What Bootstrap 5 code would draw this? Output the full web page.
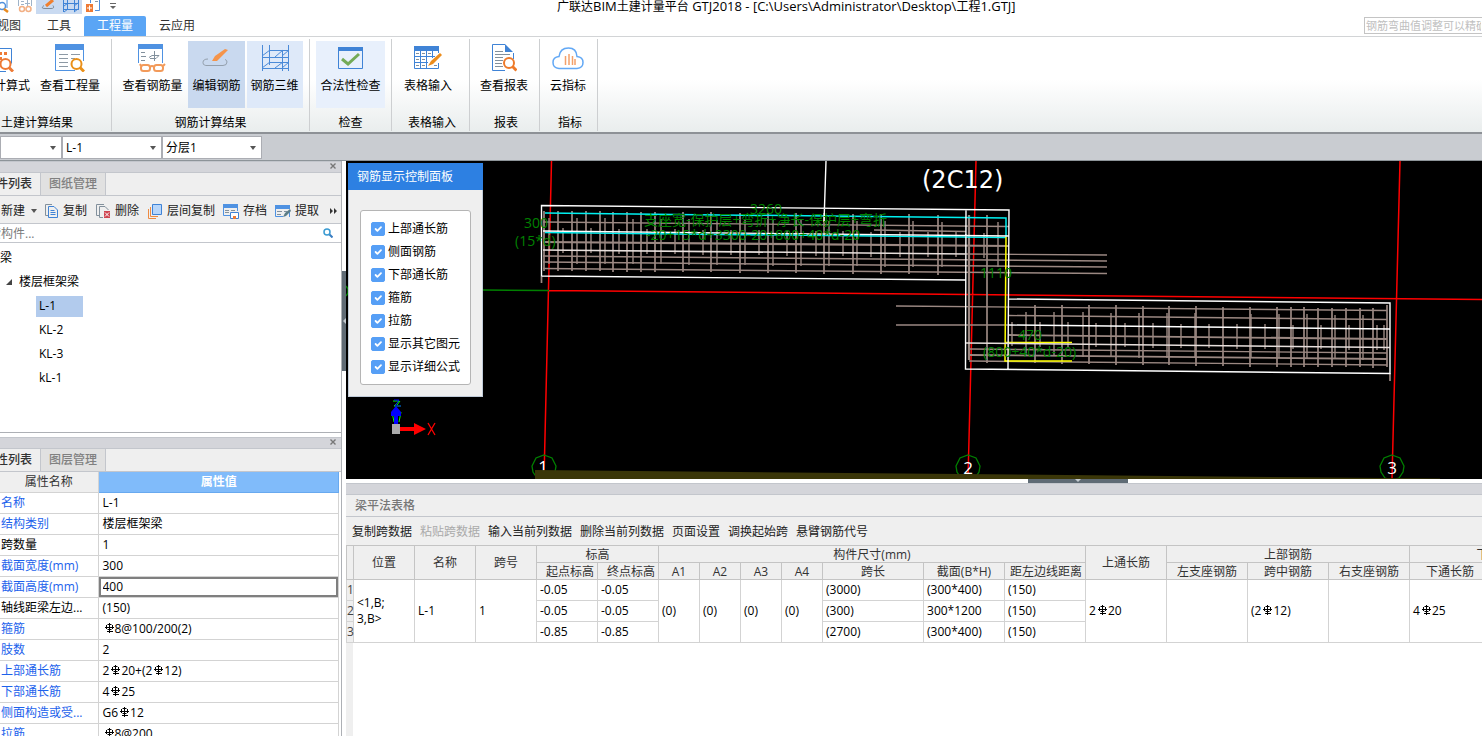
<!DOCTYPE html>
<html lang="zh-CN">
<head>
<meta charset="utf-8">
<meta name="viewport" content="width=device-width, initial-scale=1">
<title>广联达BIM土建计量平台 GTJ2018</title>
<link href="https://cdn.jsdelivr.net/npm/bootstrap@5.3.0/dist/css/bootstrap.min.css" rel="stylesheet">
<style>
  body { font-family: "Open Sans", "Noto Sans CJK SC", sans-serif; font-size: 12px; line-height: 16px; color: #000; background: #fff; }
  button, input, select { font: inherit; color: inherit; }
  button { background: none; border: 0; padding: 0; white-space: nowrap; }
  svg { display: block; flex: none; }
  table { border-collapse: collapse; }

  /* title bar and tabs */
  .titlebar { height: 16px; overflow: hidden; }
  .quick { height: 14px; width: 120px; }
  .quick-cell { width: 23px; height: 14px; display: flex; justify-content: center; align-items: flex-end; overflow: hidden; }
  .quick-cell.on { background: #c9daf1; }
  .app-title { margin-left: 437px; line-height: 12px; white-space: nowrap; }
  .app-title span { font-size: 13px; }
  .tabs-row { height: 21px; border-bottom: 1px solid #d2d4d6; }
  .ribbon-tab { color: #333; height: 20px; text-decoration: none; text-align: center; line-height: 20px; white-space: nowrap; }
  .ribbon-tab.active { background: #5aa5f5; color: #fff; border-radius: 2px 2px 0 0; }
  .help-box { width: 118px; height: 17px; margin-top: 1px; border: 1px solid #c4c4c4; border-right: 0; padding: 0 1px; font-size: 11px; }
  .help-box::placeholder { color: #c0c0c0; opacity: 1; }

  /* ribbon */
  .ribbon { height: 97px; background: linear-gradient(#fff 45%, #e9eded); border-bottom: 2px solid #8d9196; }
  .group { height: 92px; margin-top: 2px; border-right: 1px solid #cdcfd1; overflow: hidden; }
  .group-inner { flex: none; display: flex; flex-direction: column; align-items: center; }
  .shifted { padding-left: 3px; }
  .tool { height: 67px; margin-top: 2px; padding-top: 3px; display: flex; flex-direction: column; align-items: center; }
  .tool svg { margin-bottom: 6px; }
  .tool.on { background: #c9d9ef; }
  .tool.half { background: #dee9f9; }
  .tool.soft { background: #e8f0fc; }
  .group-name { margin-top: 7px; }

  .selectors { height: 27px; background: #c9ccd1; border-bottom: 1px solid #8d9499; padding-top: 2px; }
  .combo { appearance: none; width: 100px; height: 23px; border: 1px solid #abadb3; border-radius: 0; padding: 0 3px; color: #000;
    background: #fff url("data:image/svg+xml,%3Csvg xmlns='http://www.w3.org/2000/svg' width='6' height='4'%3E%3Cpath d='M0 0h6L3 4z' fill='%23555'/%3E%3C/svg%3E") no-repeat right 5px center / 6px 4px; }

  /* left docks */
  .left-side { width: 342px; border-right: 1px solid #adb0b5; }
  .strip { height: 12px; background: #d4d5da; border: 1px solid #c3c6cc; border-left: 0; border-right: 0; padding-right: 5px; }
  .strip button { height: 8px; }
  .dock-tabs { height: 23px; background: #efefef; border-bottom: 1px solid #c3c6cc; }
  .dock-tab { height: 22px; border-right: 1px solid #c3c6cc; padding: 0 8px; color: #808080; background: #e1e1e1; font-weight: 500; display: flex; align-items: center; justify-content: flex-end; overflow: hidden; }
  .dock-tab.active { width: 41px; background: #efefef; color: #333; }
  .dock-tab span { flex: none; }
  .dock-bar { height: 28px; background: #efefef; border-bottom: 1px solid #c3c6cc; color: #222; padding-top: 2px; }
  .dock-bar button { display: flex; align-items: center; gap: 4px; }
  .finder { height: 19px; border-bottom: 1px solid #c3c6cc; overflow: hidden; }
  .finder input { border: 0; height: 18px; margin-left: -24px; padding: 0 0 0 1px; outline: 0; width: 200px; }
  .finder input::placeholder { color: #7b7b7b; opacity: 1; }
  .tree { height: 190px; border-bottom: 1px solid #adb0b5; padding-top: 3px; }
  .tree li { height: 24px; display: flex; align-items: center; }
  .leaf { height: 21px; width: 47px; padding-left: 3px; margin-left: 36px; display: flex; align-items: center; }
  .leaf.active { background: #b2cbed; }
  .dock-gap { height: 4px; }

  .props { width: 339px; table-layout: fixed; }
  .props th, .props td { height: 21px; padding: 0 3px 0 4px; line-height: 16px; border: 1px solid #d3d3d3; border-top: 0; white-space: nowrap; overflow: hidden; font-weight: 400; }
  .props th:first-child { border-left: 0; padding: 0 1px; }
  .props thead th { height: 20px; text-align: center; background: #efefef; color: #333; }
  .props thead th:last-child { background: #80bbfa; color: #fff; font-weight: 700; border-color: #68a9ef; }
  .props tbody th { color: #1c62ec; }
  .props tbody th.fixed { color: #000; }
  .props td.editing { padding: 0; }
  .props td input { display: block; width: 100%; height: 20px; border: 2px solid #7f7f7f; padding: 0 2px; outline: 0; }
  .bar { display: inline-block; width: 9px; height: 10px; margin: 0 1px 0 2px; vertical-align: 0; }

  .v-split { width: 4px; background: #fff; }
  .v-split span { width: 4px; height: 100px; margin-top: 110px; background: #5f6b75; display: flex; align-items: center; }
  .h-split { height: 4px; background: #fff; }
  .h-split span { width: 100px; height: 4px; background: #5f6b75; display: flex; justify-content: center; margin-left: 682px; }

  /* drawing */
  .canvas { height: 318px; background: #000; overflow: hidden; }
  .canvas > svg { width: 100%; height: 318px; }
  .green-t { fill: #008200; font-size: 14px; }
  .panel { top: 2px; left: 2px; width: 135px; height: 234px; background: #efefef; border: 1px solid #c0cbd8; }
  .panel-head { height: 27px; background: #2d80e2; color: #fff; padding-left: 9px; line-height: 27px; margin: -1px -1px 0; }
  .panel-box { margin: 20px 11px 0; height: 175px; background: #fff; border: 1px solid #b5b5b5; border-radius: 3px; padding: 6px 10px; }
  .panel-box .form-check { height: 23px; min-height: 0; margin: 0; padding: 0; display: flex; align-items: center; gap: 3px; white-space: nowrap; }
  .panel-box .form-check-input { width: 14px; height: 14px; margin: 0; float: none; border-radius: 2px; border-color: #569ff6; background-color: #569ff6; flex: none; }

  /* span table */
  .sheet-title { height: 22px; background: #efefef; border-bottom: 1px solid #c3c6cc; color: #777; font-weight: 500; padding-left: 9px; line-height: 21px; }
  .sheet-bar { height: 28px; background: #efefef; padding: 1px 0 0 2px; color: #222; }
  .sheet-bar button { padding: 0 4px; }
  .sheet-bar button:disabled { color: #aaa; }
  .sheet { background: #fff; overflow: hidden; }
  .rail { width: 7px; background: #efefef; }
  .spans { table-layout: fixed; width: 1245px; }
  .spans th, .spans td { border: 1px solid #d3d3d3; padding: 0 3px; height: 21px; white-space: nowrap; font-weight: 400; }
  .spans thead th { background: #efefef; border-color: #c4c4c4; text-align: center; height: 17px; line-height: 15px; padding: 0; color: #333; }
  .spans thead th.end { text-align: right; padding-right: 3px; }
  .spans tbody th { padding: 0; background: #efefef; color: #444; }
  .spans tbody tr:first-child > * { border-top-color: #c4c4c4; }
</style>
</head>
<body class="vh-100 d-flex flex-column overflow-hidden">

<svg width="0" height="0" class="position-absolute" aria-hidden="true">
  <symbol id="rebar" viewBox="0 0 9 10"><path d="M4.500 0v10M0 4.500h9M2 8.500h6M2.500 1.500h4M2.500 6.500h4M1.500 2v4M7.500 2v4" fill="none" stroke="#000"/></symbol>
  <symbol id="cross" viewBox="0 0 6 6"><path d="M.5.5l5 5M5.500.5l-5 5" stroke="#777" stroke-width="1.400"/></symbol>
</svg>

<header>
  <div class="titlebar d-flex">
    <div class="quick d-flex">
      <div class="quick-cell" style="width:13px"><svg width="13" height="14" viewBox="0 0 13 14"><circle cx="2" cy="6" r="3.500" fill="#fff" stroke="#4f8fdc" stroke-width="1.500"/><path d="M4 9l4 3" stroke="#e98a1e" stroke-width="2.500"/><path d="M7 0v8" stroke="#4f8fdc"/></svg></div>
      <div class="quick-cell"><svg width="14" height="14" viewBox="0 0 14 14" fill="none"><path d="M.5 0v6M13.500 0v6M3 1.500h3M3 4.500h3M7 3.500h5M9.500 0v6" stroke="#9fb3c8"/><circle cx="4" cy="9" r="2.500" stroke="#f2b085" stroke-width="1.500"/><circle cx="10.500" cy="9" r="2.500" stroke="#f2b085" stroke-width="1.500"/></svg></div>
      <div class="quick-cell on"><svg width="14" height="14" viewBox="0 0 14 14" fill="none"><path d="M5 6L12 0" stroke="#f07f2e" stroke-width="3"/><path d="M3 5.500q-4 3 1 3h6q4 0 2-3" stroke="#7d8b99"/></svg></div>
      <div class="quick-cell on"><svg width="16" height="14" viewBox="0 0 16 14" fill="none" stroke="#3f83d6"><path d="M.5 0v12M4.500 0v10M11.500 0v12M15.500 0v10M0 3.500h16M0 9.500h16M1 6l4-3M11 6l4-3M1 12l4-3M11 12l4-3"/></svg></div>
      <div class="quick-cell"><svg width="16" height="14" viewBox="0 0 16 14"><path d="M4.500 0v3M13.500 0v10.500H9" stroke="#4f8fdc" fill="none"/><path d="M9 1.500h3" stroke="#8a98a6"/><rect x="0" y="4" width="7" height="8" fill="#ee7a35"/><path d="M1 8h5M3.500 5.500v5" stroke="#fff"/></svg></div>
      <div class="quick-cell" style="width:15px"><svg width="6" height="14" viewBox="0 0 6 14"><path d="M0 3.500h6" stroke="#666"/><path d="M0 6h6L3 9z" fill="#666"/></svg></div>
    </div>
    <div class="app-title">广联达<span>BIM</span>土建计量平台<span> GTJ2018 - [C:\Users\Administrator\Desktop\</span>工程<span>1.GTJ]</span></div>
  </div>
  <nav class="tabs-row d-flex" aria-label="功能区">
    <a href="#" class="ribbon-tab d-flex justify-content-end" style="width:21px">视图</a>
    <a href="#" class="ribbon-tab" style="width:63px; padding-left:13px">工具</a>
    <a href="#" class="ribbon-tab active" style="width:62px">工程量</a>
    <a href="#" class="ribbon-tab" style="width:62px">云应用</a>
    <input class="help-box ms-auto flex-shrink-0" type="text" aria-label="帮助搜索" placeholder="钢筋弯曲值调整可以精确">
  </nav>
</header>

<section class="ribbon d-flex flex-shrink-0">
  <div class="group d-flex justify-content-end" style="width:112px">
    <div class="group-inner" style="width:148px">
      <div class="d-flex pe-1" style="gap:10px">
        <button class="tool"><svg width="28" height="28" viewBox="0 0 28 28" fill="none"><path d="M0 4.500h25.500v15M0 27.500h20" stroke="#3f83d6"/><path d="M3 9.500h20M3 14.500h14" stroke="#ee7a35" stroke-width="3" stroke-dasharray="3 2"/><circle cx="19.500" cy="20" r="5" fill="#fff" stroke="#ee7a35" stroke-width="2"/><path d="M23 23.500l4 4" stroke="#ee7a35" stroke-width="3"/></svg>查看计算式</button>
        <button class="tool"><svg width="30" height="28" viewBox="0 0 30 28" fill="none"><path d="M0 0h29v6H0z" fill="#4f92e2"/><path d="M.5 0v26.500H20M28.500 6v11" stroke="#4f92e2"/><path d="M4 10.500h9M4 14.500h9M4 18.500h9M4 22.500h9M16 10.500h9M16 14.500h4" stroke="#8d99a4"/><circle cx="21.500" cy="20" r="5" fill="#fff" stroke="#ea9019" stroke-width="2"/><path d="M25 23.500l4 4" stroke="#ea9019" stroke-width="3"/></svg>查看工程量</button>
      </div>
      <div class="group-name">土建计算结果</div>
    </div>
  </div>
  <div class="group" style="width:198px">
    <div class="group-inner">
      <div class="d-flex" style="gap:2px">
        <button class="tool px-1"><svg width="28" height="28" viewBox="0 0 28 28" fill="none"><path d="M0 0h25v5H0z" fill="#4f92e2"/><path d="M.5 0v19M24.500 5v14" stroke="#4f92e2"/><path d="M3 8.500h4M3 12.500h5M3 16.500h4M11 13.500l3-2h7l-3 3h-6M16.500 7v10" stroke="#82909c"/><g stroke="#f29a5a" stroke-width="2"><rect x="3" y="21" width="9" height="6" rx="2.500"/><rect x="16" y="21" width="9" height="6" rx="2.500"/><path d="M12 23q2-2 4 0M3 22l-1-2M25 22l2-2"/></g></svg>查看钢筋量</button>
        <button class="tool on px-1"><svg width="28" height="28" viewBox="0 0 28 28" fill="none"><path d="M10 17l3-5L23 5l3 1-11 11z" fill="#f5944a"/><path d="M6 15q-5 0-5 3.500T6 21.500h15q4 0 4-3.500 0-2-2-2.500" stroke="#94a0ad"/></svg>编辑钢筋</button>
        <button class="tool half px-1"><svg width="28" height="28" viewBox="0 0 28 28" fill="none" stroke="#4a8ad8"><path d="M1.500 1v26M8.500 1v20M21.500 6v21M27.500 1v26M8 6.500h20M1 13.500h27M8 18.500h20M1 24.500h27M1 12l8-6M14 13l8-7M21 12l7-6M1 24l8-6M14 24l8-6M21 24l7-6"/></svg>钢筋三维</button>
      </div>
      <div class="group-name">钢筋计算结果</div>
    </div>
  </div>
  <div class="group" style="width:82px">
    <div class="group-inner">
      <button class="tool soft px-1"><svg width="28" height="28" viewBox="0 0 28 28" fill="none"><path d="M2 3h25v4H2z" fill="#3f83d6"/><path d="M2.500 5v19.500h24V5" stroke="#3f83d6"/><path d="M6 15l6 5L23 10" stroke="#74ab57" stroke-width="3"/></svg>合法性检查</button>
      <div class="group-name">检查</div>
    </div>
  </div>
  <div class="group shifted" style="width:78px">
    <div class="group-inner">
      <button class="tool px-1 me-2"><svg width="28" height="28" viewBox="0 0 28 28" fill="none"><path d="M0 2h25v5H0z" fill="#3f83d6"/><path d="M.5 6v18.500h24V19M0 12.500h21M0 18.500h14M6.500 7v17M12.500 7v17M18.500 7v7M24.500 7v2" stroke="#3f83d6"/><path d="M2 9.500h3M8 9.500h3M14 9.500h3M2 15.500h3M8 15.500h3M2 21.500h3M8 21.500h3M20 21.500h3" stroke="#82909c"/><path d="M14 22l3-5L26 9l2 2-9 9z" fill="#ec8c1b"/></svg>表格输入</button>
      <div class="group-name">表格输入</div>
    </div>
  </div>
  <div class="group shifted" style="width:70px">
    <div class="group-inner">
      <button class="tool px-1 me-1"><svg width="26" height="28" viewBox="0 0 26 28" fill="none"><path d="M14 .5H1.500v26H14M22.500 9v6" stroke="#3f83d6"/><path d="M14 0l8 8h-8z" fill="#3f83d6"/><path d="M4 7.500h8M4 10.500h15M4 13.500h8M4 16.500h8M4 19.500h7M4 22.500h8" stroke="#82909c"/><circle cx="18" cy="19" r="5" fill="#fff" stroke="#ee7a2a" stroke-width="2"/><path d="M21.500 22.500l4 4" stroke="#ee7a2a" stroke-width="3"/></svg>查看报表</button>
      <div class="group-name">报表</div>
    </div>
  </div>
  <div class="group shifted" style="width:58px">
    <div class="group-inner">
      <button class="tool px-1 me-1"><svg width="32" height="28" viewBox="0 0 32 28" fill="none"><path d="M7 24.500q-6-.5-6-6t6-6Q8 4 16.500 4q8 0 8.500 8.500 6 .5 6 6t-6 6z" stroke="#62a8f5" stroke-width="1.500"/><path d="M13.500 12v9M17 10v11M20.500 12v9M23 15v6" stroke="#f3a06a" stroke-width="1.500"/></svg>云指标</button>
      <div class="group-name">指标</div>
    </div>
  </div>
</section>

<section class="selectors d-flex flex-shrink-0">
  <select class="combo" style="width:62px" aria-label="楼层"><option></option></select>
  <select class="combo" aria-label="构件"><option>L-1</option></select>
  <select class="combo" aria-label="分层"><option>分层1</option></select>
</section>

<main class="d-flex flex-grow-1 overflow-hidden">
  <aside class="left-side flex-shrink-0 overflow-hidden">
    <div class="strip d-flex justify-content-end"><button class="d-flex align-items-center" aria-label="关闭"><svg width="6" height="6"><use href="#cross"/></svg></button></div>
    <div class="dock-tabs d-flex">
      <button class="dock-tab active"><span>构件列表</span></button><button class="dock-tab"><span>图纸管理</span></button>
    </div>
    <div class="dock-bar d-flex align-items-center">
      <button style="width:45px; gap:6px; padding-left:1px">新建<svg width="6" height="4" viewBox="0 0 6 4"><path d="M0 0h6L3 4z" fill="#555"/></svg></button>
      <button style="width:51px"><svg width="14" height="16" viewBox="0 0 14 16" fill="none"><path d="M3 12.500H.5V1.500H7" stroke="#82909c"/><path d="M3.500 3.500H9L12.500 7v7.500h-9z" stroke="#3f83d6"/><path d="M5.500 7.500h4M5.500 9.500h5M5.500 11.500h5" stroke="#3f83d6"/></svg>复制</button>
      <button style="width:52px"><svg width="15" height="16" viewBox="0 0 15 16" fill="none"><path d="M3 12.500H.5V1.500H8M3.500 14.500v-11H9L12.500 7M3.500 14.500H7" stroke="#82909c"/><path d="M8 8h6v7H8z" fill="#cf4550"/><path d="M9 9.500l4 4M13 9.500l-4 4" stroke="#fff"/></svg>删除</button>
      <button style="width:75px"><svg width="15" height="16" viewBox="0 0 15 16" fill="none"><path d="M.5 6v9.500H8M2.500 4v9.500H10" stroke="#ee8b42"/><path d="M4.500 1.500h9v10h-9z" fill="#b8d6fa" stroke="#3f83d6"/></svg>层间复制</button>
      <button style="width:52px"><svg width="16" height="16" viewBox="0 0 16 16" fill="none"><path d="M0 1h15v4H0z" fill="#4f92e2"/><path d="M.5 4v8.500H7M14.500 4v4" stroke="#4f92e2"/><path d="M2 7.500h4M2 9.500h4M8 7.500h4" stroke="#82909c"/><path d="M7.500 9.500h8v6h-8z" fill="#fff" stroke="#3f83d6"/><path d="M10 13h3v3h-3z" fill="#ee7a35"/></svg>存档</button>
      <button style="width:55px"><svg width="16" height="16" viewBox="0 0 16 16" fill="none"><path d="M0 2h15v4H0z" fill="#4f92e2"/><path d="M.5 5v8.500H8M14.500 9v5" stroke="#4f92e2"/><path d="M2 8.500h5M9 8.500h3M2 11.500h4" stroke="#82909c"/><path d="M8 14l2-4 5-4 1 2-5 5z" fill="#5b7d87"/></svg>提取</button>
      <button aria-label="更多"><svg width="8" height="6" viewBox="0 0 8 6"><path d="M0 0l3 3-3 3zM4 0l3 3-3 3z" fill="#333"/></svg></button>
    </div>
    <div class="finder d-flex align-items-center justify-content-between pe-2">
      <input type="text" aria-label="搜索构件" placeholder="搜索构件...">
      <svg width="10" height="10" viewBox="0 0 10 10"><circle cx="4" cy="4" r="3" fill="none" stroke="#3a9bd2" stroke-width="1.500"/><path d="M6.500 6.500L9.500 9.500" stroke="#3a7ec2" stroke-width="2"/></svg>
    </div>
    <ul class="tree list-unstyled m-0">
      <li>梁</li>
      <li><svg width="19" height="8" viewBox="0 0 19 8"><path d="M12 1v6H6z" fill="#444"/></svg>楼层框架梁</li>
      <li><span class="leaf active">L-1</span></li>
      <li><span class="leaf">KL-2</span></li>
      <li><span class="leaf">KL-3</span></li>
      <li><span class="leaf">kL-1</span></li>
    </ul>
    <div class="dock-gap"></div>
    <div class="strip d-flex justify-content-end"><button class="d-flex align-items-center" aria-label="关闭"><svg width="6" height="6"><use href="#cross"/></svg></button></div>
    <div class="dock-tabs d-flex">
      <button class="dock-tab active"><span>属性列表</span></button><button class="dock-tab"><span>图层管理</span></button>
    </div>
    <table class="props">
      <colgroup><col style="width:98px"><col></colgroup>
      <thead><tr><th scope="col">属性名称</th><th scope="col">属性值</th></tr></thead>
      <tbody>
        <tr><th scope="row">名称</th><td>L-1</td></tr>
        <tr><th scope="row">结构类别</th><td>楼层框架梁</td></tr>
        <tr><th scope="row" class="fixed">跨数量</th><td>1</td></tr>
        <tr><th scope="row">截面宽度(mm)</th><td>300</td></tr>
        <tr><th scope="row">截面高度(mm)</th><td class="editing"><input type="text" value="400" aria-label="截面高度(mm)"></td></tr>
        <tr><th scope="row" class="fixed">轴线距梁左边...</th><td>(150)</td></tr>
        <tr><th scope="row">箍筋</th><td><svg class="bar"><use href="#rebar"/></svg>8@100/200(2)</td></tr>
        <tr><th scope="row">肢数</th><td>2</td></tr>
        <tr><th scope="row">上部通长筋</th><td>2<svg class="bar"><use href="#rebar"/></svg>20+(2<svg class="bar"><use href="#rebar"/></svg>12)</td></tr>
        <tr><th scope="row">下部通长筋</th><td>4<svg class="bar"><use href="#rebar"/></svg>25</td></tr>
        <tr><th scope="row">侧面构造或受...</th><td>G6<svg class="bar"><use href="#rebar"/></svg>12</td></tr>
        <tr><th scope="row">拉筋</th><td><svg class="bar"><use href="#rebar"/></svg>8@200</td></tr>
      </tbody>
    </table>
  </aside>

  <div class="v-split flex-shrink-0"><span><svg width="4" height="6" viewBox="0 0 4 6"><path d="M4 0v6L1 3z" fill="#c5ccd2"/></svg></span></div>

  <section class="flex-grow-1 d-flex flex-column overflow-hidden">
    <div class="canvas position-relative flex-shrink-0">
      <svg viewBox="346 161 1136 318" preserveAspectRatio="xMinYMin slice" fill="none" role="img" aria-label="梁钢筋三维">
        <g stroke="#f00" stroke-width="1.500">
          <path d="M551.500 161L544 479M976 161L968 479M1400 161L1392 479M549 290.500L1482 299.500"/>
          <path d="M483 290l66 .5M346 286l2 3v4l-2 3" stroke="#008000"/>
        </g>
        <g stroke="#9b8882" stroke-width="1.400">
          <path d="M544 211v60M558 211v60M572 211v60M586 211v60M600 211v60M613 212v60M627 212v60M641 212v60M655 212v60M683 212v60M711 212v60M740 213v60M768 213v60M796 213v60M824 213v61M853 214v60M881 214v60M909 214v60M938 215v60" stroke-width="1.700"/>
          <path d="M549 218v46M577 218v46M605 218v46M633 219v45M661 219v45M689 219v46M717 220v45M745 220v45M773 220v46M801 220v46M829 221v45M857 221v45M885 221v46M913 221v46M942 222v45M998 222v45"/>
          <path d="M563 228v25M591 228v25M619 229v25M647 229v25M675 229v25M703 230v25M731 230v25M759 230v25M787 231v25M816 231v25M843 231v25M871 232v25M900 232v25M928 232v25M956 232v25M984 233v25"/>
          <path d="M543 222L1009 226.500M874 230l92 1.500M543 256L1107 261M543 262L1107 267M543 268.500L1107 273.500M966 254l141 1"/>
          <path d="M543 242L1009 246M969 215v145" stroke-width="2.200"/>
          <path d="M987 215v148M541.500 276v7M1390 373v8" stroke-width="1.700"/>
          <path d="M896 306L1387 310.500M896 325h113M1009 315.500L1387 319.500M969 349L1387 353M969 361L1387 365"/>
          <path d="M1009 335L1387 339M969 355L1387 359" stroke-width="1.800"/>
          <path d="M1035 305v58M1062 305v59M1089 305v59M1116 305v60M1143 306v59M1169 306v59M1196 306v60M1223 307v59M1250 307v60M1277 307v60M1291 307v60M1304 307v60M1318 308v59M1332 308v59M1346 308v59M1360 308v59M1373 308v60M1387 305v62" stroke-width="1.700"/>
          <path d="M1026 312v44M1054 312v44M1083 312v45M1111 313v44M1139 313v45M1167 313v45M1195 313v45M1251 314v44M1279 314v44M1307 314v45M1335 315v44M1363 315v45"/>
          <path d="M1012 322v24M1040 322v25M1068 322v25M1096 323v24M1125 323v24M1153 323v25M1181 324v24M1209 324v24M1237 324v25M1265 324v25M1293 325v24M1321 325v24M1349 325v25M1377 325v25M1384 325v25"/>
        </g>
        <path d="M545 213L1006 218v19M545 232.500L1006 237.500" stroke="#00f0f0" stroke-width="1.500"/>
        <path d="M1006 237L1005 361h67M1005 342.500h67" stroke="#ff0" stroke-width="1.500"/>
        <g stroke="#fff">
          <path d="M826 161L824 222M541.500 276V205.500L1009 210L1008 369M541.500 276L966 280M966 210L965.500 369L1390 373.500V303L1009 299M543 231L1009 236M1009 325L1390 329" stroke-width="1.400"/>
          <path d="M543 250L966 254M966 343L1390 347.500" stroke="#e6dedb" stroke-width="1.600"/>
        </g>
        <g class="green-t">
          <text x="524" y="228">300</text><text x="515" y="246">(15*d)</text>
          <text x="750" y="214">3260</text>
          <text x="644" y="225">支座宽-保护层+弯折+净长-保护层+弯折</text>
          <text x="646" y="240">-20+15*d+3300-20+800+40*d-20</text>
          <text x="980" y="278">1110</text><text x="1018" y="340">470</text>
          <text x="983" y="357">(800+40*d-20)</text>
        </g>
        <text x="922" y="188" fill="#fff" font-family="DejaVu Sans" font-size="24">(2C12)</text>
        <g stroke="#008000" stroke-width="1.300">
          <path id="bubble" d="M544 455l8 3 4 8-1 6-4 6-7 2-7-2-4-6-1-6 4-8z"/>
          <use href="#bubble" x="424"/><use href="#bubble" x="848"/>
        </g>
        <g fill="#fff" font-size="17" text-anchor="middle"><text x="543" y="473">1</text><text x="968" y="474">2</text><text x="1392" y="474">3</text></g>
        <path d="M535 470L1440 478.500V480H535z" fill="#3a3608"/>
        <path d="M393 401h6l-5 5h7M392 412l2 10M401 412l-2 10M400 401l-3 4" stroke="#0f0"/>
        <path d="M394 400h5l-4 6h6" stroke="#00f"/>
        <path d="M396 406l5 6v4h-3v10h-4v-10h-3v-4z" fill="#00f"/>
        <path d="M392 424h8v10h-8z" fill="#aaa"/>
        <path d="M400 427h14v-4l12 6-12 6v-4h-14z" fill="#f00"/>
        <path d="M428 423l7 12M435 423l-7 12" stroke="#f00" stroke-width="1.300"/>
      </svg>
      <form class="panel position-absolute">
        <div class="panel-head">钢筋显示控制面板</div>
        <div class="panel-box">
          <div class="form-check"><input class="form-check-input" type="checkbox" id="c1" checked><label for="c1">上部通长筋</label></div>
          <div class="form-check"><input class="form-check-input" type="checkbox" id="c2" checked><label for="c2">侧面钢筋</label></div>
          <div class="form-check"><input class="form-check-input" type="checkbox" id="c3" checked><label for="c3">下部通长筋</label></div>
          <div class="form-check"><input class="form-check-input" type="checkbox" id="c4" checked><label for="c4">箍筋</label></div>
          <div class="form-check"><input class="form-check-input" type="checkbox" id="c5" checked><label for="c5">拉筋</label></div>
          <div class="form-check"><input class="form-check-input" type="checkbox" id="c6" checked><label for="c6">显示其它图元</label></div>
          <div class="form-check"><input class="form-check-input" type="checkbox" id="c7" checked><label for="c7">显示详细公式</label></div>
        </div>
      </form>
    </div>
    <div class="h-split flex-shrink-0"><span><svg width="6" height="3" viewBox="0 0 6 3"><path d="M0 0h6L3 3z" fill="#c5ccd2"/></svg></span></div>
    <div class="strip flex-shrink-0"></div>
    <div class="sheet-title flex-shrink-0">梁平法表格</div>
    <div class="sheet-bar d-flex align-items-center flex-shrink-0">
      <button>复制跨数据</button><button disabled>粘贴跨数据</button><button>输入当前列数据</button><button>删除当前列数据</button><button>页面设置</button><button>调换起始跨</button><button>悬臂钢筋代号</button>
    </div>
    <div class="sheet flex-grow-1 d-flex flex-column">
      <table class="spans flex-shrink-0">
        <colgroup><col style="width:7px"><col span="5" style="width:61px"><col span="4" style="width:41px"><col style="width:101px"><col span="7" style="width:81px"><col style="width:101px"></colgroup>
        <thead>
          <tr><th rowspan="2"></th><th rowspan="2">位置</th><th rowspan="2">名称</th><th rowspan="2">跨号</th><th colspan="2">标高</th><th colspan="7">构件尺寸(mm)</th><th rowspan="2">上通长筋</th><th colspan="3">上部钢筋</th><th colspan="2">下部钢筋</th></tr>
          <tr><th class="end">起点标高</th><th class="end">终点标高</th><th>A1</th><th>A2</th><th>A3</th><th>A4</th><th>跨长</th><th>截面(B*H)</th><th class="end">距左边线距离</th><th>左支座钢筋</th><th>跨中钢筋</th><th>右支座钢筋</th><th>下通长筋</th><th>侧面钢筋</th></tr>
        </thead>
        <tbody>
          <tr><th scope="row">1</th><td rowspan="3">&lt;1,B;<br>3,B&gt;</td><td rowspan="3">L-1</td><td rowspan="3">1</td><td>-0.05</td><td>-0.05</td><td rowspan="3">(0)</td><td rowspan="3">(0)</td><td rowspan="3">(0)</td><td rowspan="3">(0)</td><td>(3000)</td><td>(300*400)</td><td>(150)</td><td rowspan="3">2<svg class="bar"><use href="#rebar"/></svg>20</td><td rowspan="3"></td><td rowspan="3">(2<svg class="bar"><use href="#rebar"/></svg>12)</td><td rowspan="3"></td><td rowspan="3">4<svg class="bar"><use href="#rebar"/></svg>25</td><td rowspan="3"></td></tr>
          <tr><th scope="row">2</th><td>-0.05</td><td>-0.05</td><td>(300)</td><td>300*1200</td><td>(150)</td></tr>
          <tr><th scope="row">3</th><td>-0.85</td><td>-0.85</td><td>(2700)</td><td>(300*400)</td><td>(150)</td></tr>
        </tbody>
      </table>
      <div class="rail flex-grow-1"></div>
    </div>
  </section>
</main>
<script src="https://cdn.jsdelivr.net/npm/bootstrap@5.3.0/dist/js/bootstrap.bundle.min.js"></script>
</body>
</html>
